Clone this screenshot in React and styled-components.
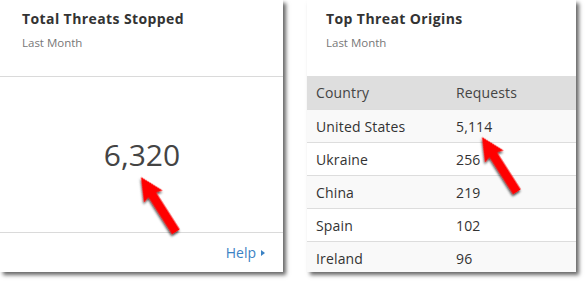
import React from 'react';
import styled, { createGlobalStyle } from 'styled-components';

const GlobalStyle = createGlobalStyle`
  html, body {
    margin: 0;
    padding: 0;
    background: #ffffff;
    font-family: "Open Sans", "Liberation Sans", sans-serif;
  }
`;

const Page = styled.div`
  position: relative;
  width: 585px;
  height: 281px;
  display: flex;
  align-items: flex-start;
  gap: 24px;
  overflow: hidden;
`;

const Card = styled.div`
  width: ${(p) => p.$width}px;
  height: 272px;
  background: #fff;
  display: flex;
  flex-direction: column;
  overflow: hidden;
  box-shadow: 3px 3px 4px rgba(0, 0, 0, 0.6);
  flex-shrink: 0;
`;

const CardHeader = styled.div`
  height: 76px;
  box-sizing: border-box;
  padding: 9px 0 0 ${(p) => p.$pad}px;
  flex-shrink: 0;
`;

const Title = styled.div`
  font-size: 14px;
  font-weight: 700;
  color: #333;
  line-height: 20px;
  letter-spacing: 0.4px;
`;

const Subtitle = styled.div`
  font-size: 11.5px;
  color: #777;
  margin-top: 6px;
  line-height: 15px;
`;

const Divider = styled.div`
  height: 1px;
  background: #dadada;
  flex-shrink: 0;
`;

const BigNumber = styled.div`
  flex: 1;
  display: flex;
  align-items: center;
  justify-content: center;
  font-size: 30px;
  color: #444;
  padding-left: 1px;
`;

const Footer = styled.div`
  height: 39px;
  display: flex;
  align-items: center;
  justify-content: flex-end;
  padding-right: 18px;
  font-size: 14px;
  color: #3b82c4;
  gap: 5px;
`;

const Caret = styled.span`
  width: 0;
  height: 0;
  border-top: 3px solid transparent;
  border-bottom: 3px solid transparent;
  border-left: 4px solid #3b82c4;
`;

const Table = styled.div`
  display: flex;
  flex-direction: column;
`;

const Row = styled.div`
  display: grid;
  grid-template-columns: 140px 1fr;
  height: ${(p) => (p.$head ? 34 : 33)}px;
  box-sizing: border-box;
  align-items: center;
  padding-left: 9px;
  font-size: 14px;
  letter-spacing: 0.15px;
  color: ${(p) => (p.$head ? '#444' : '#333')};
  background: ${(p) => (p.$head ? '#dedede' : p.$odd ? '#f9f9f9' : '#ffffff')};
  border-bottom: 1px solid #dddddd;
  flex-shrink: 0;
`;

const ArrowSvg = styled.svg`
  position: absolute;
  left: ${(p) => p.$x}px;
  top: ${(p) => p.$y}px;
  overflow: visible;
`;

const Arrow = ({ x, y }) => (
  <ArrowSvg $x={x} $y={y} width="1" height="1">
    <defs>
      <filter id={`sh${x}`} x="-50%" y="-50%" width="200%" height="200%">
        <feDropShadow dx="-1.5" dy="1.5" stdDeviation="1.3" floodColor="#000" floodOpacity="0.75" />
      </filter>
    </defs>
    <g transform="rotate(-32.5)" filter={`url(#sh${x})`}>
      <polygon points="0,0 11,23 4.5,21 4.5,65 -4.5,65 -4.5,21 -11,23" fill="#ff0000" />
    </g>
  </ArrowSvg>
);

const rows = [
  ['United States', '5,114'],
  ['Ukraine', '256'],
  ['China', '219'],
  ['Spain', '102'],
  ['Ireland', '96'],
];

const App = () => (
  <>
    <GlobalStyle />
    <Page>
      <Card $width={283}>
        <CardHeader $pad={22}>
          <Title>Total Threats Stopped</Title>
          <Subtitle>Last Month</Subtitle>
        </CardHeader>
        <Divider />
        <BigNumber>6,320</BigNumber>
        <Divider />
        <Footer>
          Help <Caret />
        </Footer>
      </Card>
      <Card $width={269}>
        <CardHeader $pad={19}>
          <Title>Top Threat Origins</Title>
          <Subtitle>Last Month</Subtitle>
        </CardHeader>
        <Table>
          <Row $head>
            <span>Country</span>
            <span>Requests</span>
          </Row>
          {rows.map(([c, n], i) => (
            <Row key={c} $odd={i % 2 === 0}>
              <span>{c}</span>
              <span>{n}</span>
            </Row>
          ))}
        </Table>
      </Card>
      <Arrow x={141} y={177} />
      <Arrow x={482} y={137} />
    </Page>
  </>
);

export default App;
